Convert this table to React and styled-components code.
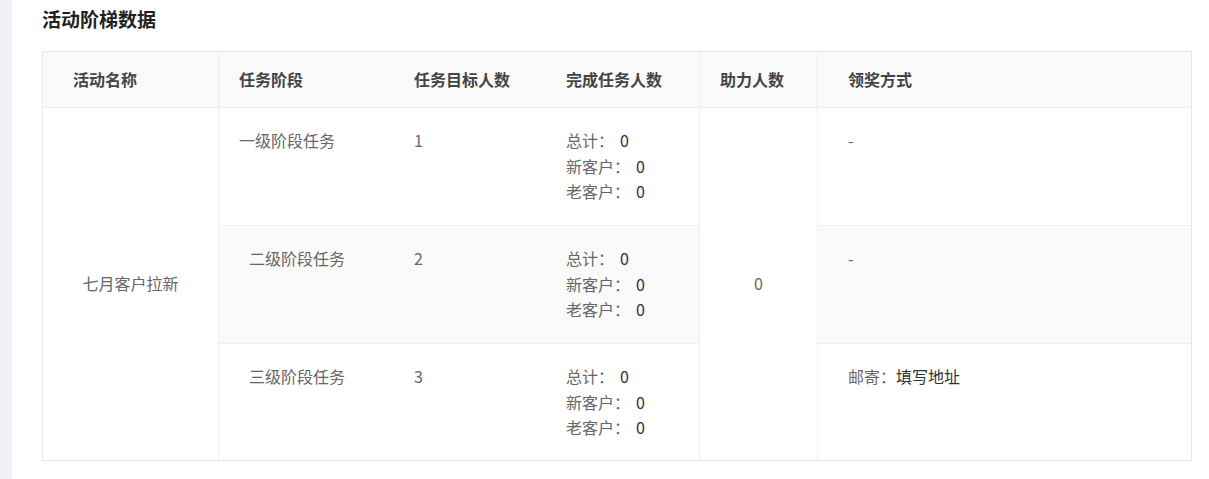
import React from 'react'
import styled, { createGlobalStyle } from 'styled-components'

const GlobalStyle = createGlobalStyle`
  html, body {
    margin: 0;
    padding: 0;
    background: #fff;
    font-family: "Noto Sans CJK SC", "Noto Sans", sans-serif;
  }
`

const stages = [
  { name: '一级阶段任务', target: 1, total: 0, fresh: 0, old: 0, reward: null, indent: false },
  { name: '二级阶段任务', target: 2, total: 0, fresh: 0, old: 0, reward: null, indent: true },
  { name: '三级阶段任务', target: 3, total: 0, fresh: 0, old: 0, reward: '填写地址', indent: true },
]

function App() {
  return (
    <Page>
      <GlobalStyle />
      <Sidebar />
      <Content>
        <Title>活动阶梯数据</Title>
        <Table>
          <HeadCell pad={30} divider>活动名称</HeadCell>
          <HeadCell>任务阶段</HeadCell>
          <HeadCell>任务目标人数</HeadCell>
          <HeadCell divider>完成任务人数</HeadCell>
          <HeadCell divider>助力人数</HeadCell>
          <HeadCell pad={30}>领奖方式</HeadCell>

          {stages.map((s, i) => (
            <React.Fragment key={s.name}>
              {i === 0 && <SpanCell divider>七月客户拉新</SpanCell>}
              <Cell shaded={i === 1} top={i > 0} pad={s.indent ? 30 : 20}>{s.name}</Cell>
              <Cell shaded={i === 1} top={i > 0}>{s.target}</Cell>
              <Cell shaded={i === 1} top={i > 0} divider>
                <Line>总计：<Value>{s.total}</Value></Line>
                <Line>新客户：<Value>{s.fresh}</Value></Line>
                <Line>老客户：<Value>{s.old}</Value></Line>
              </Cell>
              {i === 0 && <SpanCell divider>0</SpanCell>}
              <Cell shaded={i === 1} top={i > 0} pad={30}>
                {s.reward ? (
                  <Line>邮寄：<Strong>{s.reward}</Strong></Line>
                ) : '-'}
              </Cell>
            </React.Fragment>
          ))}
        </Table>
      </Content>
    </Page>
  )
}

const Page = styled.div`
  display: flex;
  min-height: 479px;
`

const Sidebar = styled.div`
  width: 12px;
  flex-shrink: 0;
  background: #f0f1f5;
`

const Content = styled.div`
  flex: 1;
  padding: 6px 17px 0 30px;
`

const Title = styled.h3`
  margin: 0 0 19px;
  font-size: 19px;
  line-height: 26px;
  font-weight: bold;
  color: #222;
`

const Table = styled.div`
  display: grid;
  grid-template-columns: 176px 175px 152px 154px 118px 1fr;
  grid-template-rows: 56px 117px 118px 117px;
  border: 1px solid #e8e8e8;
  font-size: 16px;
  line-height: 25.6px;
  color: #666;
`

const HeadCell = styled.div`
  display: flex;
  align-items: center;
  padding-left: ${p => p.pad || 20}px;
  background: #fafafa;
  border-bottom: 1px solid #efefef;
  border-right: ${p => (p.divider ? '1px solid #efefef' : 'none')};
  font-weight: 600;
  color: #444;
`

const Cell = styled.div`
  padding: 20px 0 0 ${p => p.pad || 20}px;
  background: ${p => (p.shaded ? '#fafafa' : '#fff')};
  border-top: ${p => (p.top ? '1px solid #efefef' : 'none')};
  border-right: ${p => (p.divider ? '1px solid #efefef' : 'none')};
`

const SpanCell = styled.div`
  grid-row: span 3;
  display: flex;
  align-items: center;
  justify-content: center;
  border-right: ${p => (p.divider ? '1px solid #efefef' : 'none')};
`

const Line = styled.div`
  white-space: nowrap;
`

const Value = styled.span`
  margin-left: 6px;
  color: #333;
`

const Strong = styled.span`
  color: #333;
`

export default App
